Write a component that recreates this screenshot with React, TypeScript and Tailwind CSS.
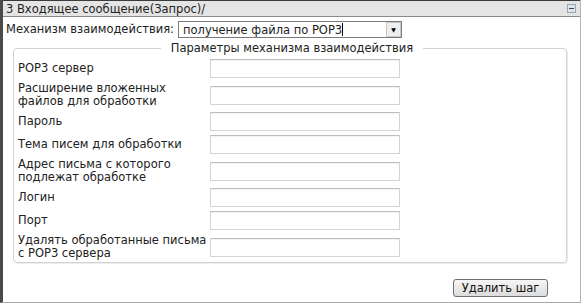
import React from "react";

const rows: { label: string[] }[] = [
  { label: ["POP3 сервер"] },
  { label: ["Расширение вложенных", "файлов для обработки"] },
  { label: ["Пароль"] },
  { label: ["Тема писем для обработки"] },
  { label: ["Адрес письма с которого", "подлежат обработке"] },
  { label: ["Логин"] },
  { label: ["Порт"] },
  { label: ["Удалять обработанные письма", "с POP3 сервера"] },
];

export default function App() {
  return (
    <div
      className="w-[587px] h-[304px] bg-white text-[#222] text-[11.5px] leading-[13px]"
      style={{ fontFamily: '"DejaVu Sans", Verdana, sans-serif' }}
    >
      <div className="w-[581px] h-[303px] border-l-[3px] border-l-[#4a4a4a] border-r border-r-[#b5b5b5] border-b border-b-[#a8a8a8] flex flex-col">
        {/* header */}
        <div className="h-[17px] border-t border-t-[#3a3a3a] border-b border-b-[#8a8a8a] bg-[#e4e4e4] flex items-center justify-between pl-[3px] pr-[4px]">
          <span className="leading-[14px]">3 Входящее сообщение(Запрос)/</span>
          <span className="w-[9px] h-[9px] border border-[#9aa6b4] bg-[#dfe4ea] flex items-center justify-center">
            <span className="w-[5px] h-[1px] bg-[#444]" />
          </span>
        </div>
        {/* mechanism row */}
        <div className="flex items-center pl-[3px] mt-[4px] h-[17px]">
          <span className="w-[172px] shrink-0 whitespace-nowrap">Механизм взаимодействия:</span>
          <div className="w-[224px] h-[17px] border border-[#7a7a7a] flex items-center bg-white">
            <span className="pl-[4px] flex-1 whitespace-nowrap leading-[14px]">
              получение файла по POP3<span className="inline-block w-[1px] h-[13px] bg-black align-[-2px]" />
            </span>
            <span className="w-[15px] h-[15px] border border-[#c8c8c8] bg-[#efefef] flex items-center justify-center text-[6px] text-black">▼</span>
          </div>
        </div>
        {/* fieldset */}
        <fieldset className="ml-[10px] mt-[3px] w-[554px] h-[222px] border border-[#d2d2d2] rounded-[4px] pl-[4px] pt-[2px] shadow-[1px_1px_1px_rgba(0,0,0,0.08)]">
          <legend className="mx-auto px-[10px] leading-[14px] text-[#222]">Параметры механизма взаимодействия</legend>
          <div className="flex flex-col">
            {rows.map((r, i) => (
              <div
                key={i}
                className={`flex items-center py-[2px] ${r.label.length > 1 ? "h-[30px]" : "h-[23px]"}`}
              >
                <div className="w-[192px] shrink-0 leading-[13px] whitespace-nowrap">
                  {r.label.map((l, j) => (
                    <div key={j}>{l}</div>
                  ))}
                </div>
                <div className="w-[190px] h-[19px] border border-[#d4d4d4] border-t-[#bdbdbd] bg-white shadow-[inset_0_1px_1px_rgba(0,0,0,0.05)]" />
              </div>
            ))}
          </div>
        </fieldset>
        {/* button */}
        <div className="flex justify-end pr-[32px] mt-[16px]">
          <button className="w-[95px] h-[18px] border border-[#707070] rounded-[3px] bg-gradient-to-b from-[#f6f6f6] to-[#dcdcdc] text-[11.5px] leading-[14px] text-[#111]">
            Удалить шаг
          </button>
        </div>
      </div>
    </div>
  );
}
